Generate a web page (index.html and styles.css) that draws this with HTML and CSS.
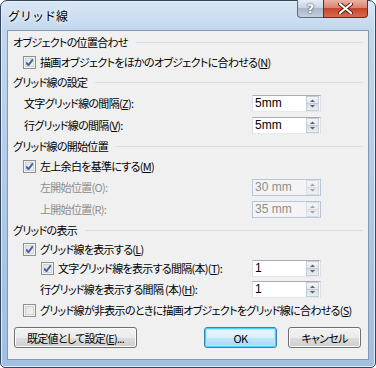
FILE: index.html
```html
<!DOCTYPE html>
<html lang="ja">
  <head>
    <meta charset="UTF-8">
    <title>グリッド線</title>
    <link rel="stylesheet" href="styles.css">
  </head>
  <body>
<div class="window">
  <div class="titlebar">
    <span class="title">グリッド線</span>
    <div class="caption">
      <span class="cap help">?</span>
      <span class="cap close">
        <svg width="15" height="11" viewBox="0 0 15 11"><path d="M2 1 L13 10 M13 1 L2 10" stroke="#5a1a10" stroke-width="4" stroke-linecap="round"/><path d="M2 1 L13 10 M13 1 L2 10" stroke="#fff" stroke-width="2.2" stroke-linecap="round"/></svg>
      </span>
    </div>
  </div>

  <div class="client">
    <div class="group">オブジェクトの位置合わせ</div>
    <div class="check lv1"><span class="box on"></span>描画オブジェクトをほかのオブジェクトに合わせる(<u>N</u>)</div>

    <div class="group">グリッド線の設定</div>
    <div class="field lv1">
      <span>文字グリッド線の間隔(<u>Z</u>):</span>
      <span class="spin"><span class="val">5mm</span><span class="arrows"></span></span>
    </div>
    <div class="field lv1">
      <span>行グリッド線の間隔(<u>V</u>):</span>
      <span class="spin"><span class="val">5mm</span><span class="arrows"></span></span>
    </div>

    <div class="group">グリッド線の開始位置</div>
    <div class="check lv1"><span class="box on"></span>左上余白を基準にする(<u>M</u>)</div>
    <div class="field lv2 off">
      <span>左開始位置(O):</span>
      <span class="spin"><span class="val">30 mm</span><span class="arrows"></span></span>
    </div>
    <div class="field lv2 off">
      <span>上開始位置(R):</span>
      <span class="spin"><span class="val">35 mm</span><span class="arrows"></span></span>
    </div>

    <div class="group">グリッドの表示</div>
    <div class="check lv1 short"><span class="box on"></span>グリッド線を表示する(<u>L</u>)</div>
    <div class="field check-field">
      <span class="check"><span class="box on"></span>文字グリッド線を表示する間隔(本)(<u>T</u>):</span>
      <span class="spin"><span class="val">1</span><span class="arrows"></span></span>
    </div>
    <div class="field lv2">
      <span>行グリッド線を表示する間隔 (本)(<u>H</u>):</span>
      <span class="spin"><span class="val">1</span><span class="arrows"></span></span>
    </div>
    <div class="check lv1"><span class="box"></span>グリッド線が非表示のときに描画オブジェクトをグリッド線に合わせる(<u>S</u>)</div>

    <div class="buttons">
      <span class="btn wide">既定値として設定(<u>E</u>)...</span>
      <span class="btn default">OK</span>
      <span class="btn">キャンセル</span>
    </div>
  </div>
</div>
  </body>
</html>
```

FILE: styles.css
```css
body {
  margin: 0;
  background: #ffffff;
  font-family: "Noto Sans CJK JP", "Noto Sans", sans-serif;
  font-size: 11px;
  letter-spacing: -0.7px;
  font-feature-settings: "palt";
  color: #000000;
  white-space: nowrap;
  }

u { text-decoration: underline; text-underline-offset: 1px; }

.window {
  width: 376px;
  height: 368px;
  box-sizing: border-box;
  border: 1px solid #34465c;
  border-radius: 7px 7px 5px 5px;
  background: linear-gradient(#d9e7f5, #c2d7ed 30px, #aec9e8 200px, #a0bfe3);
  box-shadow: inset 0 0 0 1px #e4eef8;
  padding: 0 6px 7px 6px;
  display: flex;
  flex-direction: column;
  }

.titlebar {
  height: 29px;
  display: flex;
  align-items: flex-start;
  }

.title {
  margin: 6px 0 0 1px;
  font-size: 12px;
  letter-spacing: 0;
  font-feature-settings: normal;
  text-shadow: 0 0 6px #ffffff, 0 0 3px #ffffff;
  }

.caption {
  margin: -1px 1px 0 auto;
  display: flex;
  }

.cap {
  height: 18px;
  box-sizing: border-box;
  border: 1px solid #5b6b80;
  border-top: none;
  display: flex;
  align-items: center;
  justify-content: center;
  }

.help {
  width: 26px;
  border-radius: 0 0 0 4px;
  border-right: none;
  background: linear-gradient(#e6edf5, #c9d5e3 45%, #a9b7c9 50%, #c4d0de);
  color: #ffffff;
  font-family: "DejaVu Sans", sans-serif;
  font-weight: bold;
  font-size: 13px;
  letter-spacing: 0;
  text-shadow: 0 0 2px #36475c, 0 0 1px #36475c;
  }

.close {
  width: 45px;
  border-radius: 0 0 4px 0;
  background: linear-gradient(#e9b2a4, #d98470 45%, #c7452c 50%, #d66d4f);
  border-color: #6b2a1e;
  }

.client {
  flex: 1;
  background: #f0f0f0;
  border: 1px solid #8497af;
  padding: 1px 0 0 5px;
  display: flex;
  flex-direction: column;
  }

.group {
  height: 20px;
  display: flex;
  align-items: center;
  gap: 8px;
  padding-right: 5px;
  }

.group::after {
  content: "";
  flex: 1;
  border-top: 1px solid #d5dde5;
  margin-top: 1px;
  }

.check {
  height: 20px;
  display: flex;
  align-items: center;
  }

.check.short { height: 18px; }

.lv1.check { padding-left: 10px; }

.box {
  width: 13px;
  height: 13px;
  box-sizing: border-box;
  border: 1px solid #8e8f8f;
  background: linear-gradient(135deg, #dcdcdc, #fbfbfb);
  box-shadow: inset 0 0 0 1px #f4f4f4, inset 0 0 0 2px #d2d2d2;
  margin-right: 4px;
  flex: none;
  }

.box.on {
  background: url("data:image/svg+xml,%3Csvg xmlns='http://www.w3.org/2000/svg' width='11' height='11'%3E%3Cpath d='M2 5.5 L4.5 8.2 L9 2.2' fill='none' stroke='%234a63a8' stroke-width='2'/%3E%3C/svg%3E") center no-repeat, linear-gradient(135deg, #dcdcdc, #fbfbfb);
  }

.field {
  height: 22px;
  display: flex;
  align-items: center;
  justify-content: space-between;
  padding-right: 47px;
  }

.field.lv1 { padding-left: 11px; }
.field.lv2 { padding-left: 27px; }
.field.check-field { height: 20px; padding-left: 28px; }

.off { color: #8d8d8d; }

.spin {
  width: 69px;
  height: 17px;
  box-sizing: border-box;
  border: 1px solid #abadb3;
  border-left-color: #dbdfe6;
  border-right-color: #dbdfe6;
  border-bottom-color: #e3e9ef;
  background: #ffffff;
  display: flex;
  align-items: center;
  padding-left: 2px;
  color: #000000;
  }

.val {
  font-family: "Liberation Sans", sans-serif;
  font-size: 12px;
  letter-spacing: 0;
  }

.arrows {
  margin: 0 1px 0 auto;
  width: 13px;
  height: 15px;
  box-sizing: border-box;
  border: 1px solid #c6ccd4;
  background: url("data:image/svg+xml,%3Csvg xmlns='http://www.w3.org/2000/svg' width='11' height='13'%3E%3Cpath d='M3 5 L5.5 2.5 L8 5Z M3 8 L5.5 10.5 L8 8Z' fill='%234d6185'/%3E%3Cpath d='M0 6.5 H11' stroke='%23c6ccd4'/%3E%3C/svg%3E") center no-repeat, linear-gradient(#f5f5f5, #e6e6e6 50%, #d8dde3 52%, #eceef0);
  }

.off .spin {
  background: #f4f4f4;
  border-color: #b7c6da;
  color: #8d8d8d;
  }

.off .arrows {
  opacity: 0.55;
  }

.buttons {
  margin-top: 7px;
  padding-right: 7px;
  display: flex;
  gap: 11px;
  }

.btn {
  width: 73px;
  height: 21px;
  box-sizing: border-box;
  border: 1px solid #707070;
  border-radius: 3px;
  background: linear-gradient(#f2f2f2, #ebebeb 50%, #dddddd 51%, #cfcfcf);
  box-shadow: inset 0 0 0 1px #fbfbfb;
  display: flex;
  align-items: center;
  justify-content: center;
  }

.btn.wide {
  width: 123px;
  margin: 0 auto 0 1px;
  }

.btn.default {
  border-color: #3c7fb1;
  box-shadow: inset 0 0 0 1px #48d2f6, inset 0 0 0 2px #aeeafc;
  background: linear-gradient(#eaf6fd, #d9f0fc 50%, #bee6fd 51%, #a7d9f5);
  }
```
